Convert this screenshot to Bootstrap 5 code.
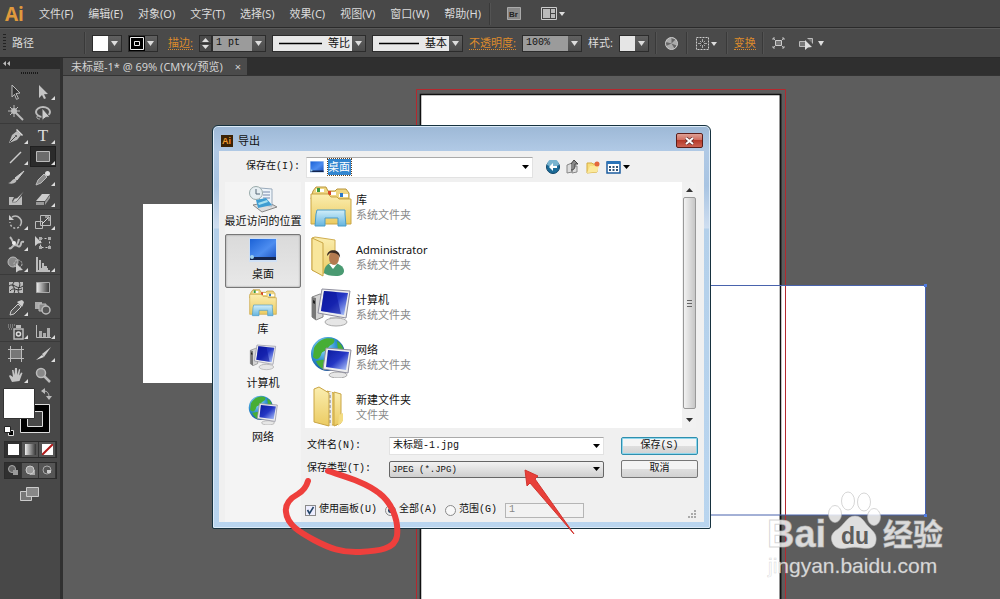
<!DOCTYPE html>
<html lang="zh-CN">
<head>
<meta charset="utf-8">
<meta name="viewport" content="width=device-width, initial-scale=1">
<title>未标题-1* @ 69% (CMYK/预览)</title>
<link href="https://cdn.jsdelivr.net/npm/bootstrap@5.3.0/dist/css/bootstrap.min.css" rel="stylesheet">
<style>
:root{--ui:"Noto Sans","Noto Sans CJK SC",sans-serif;--mono:"Liberation Mono","Noto Sans CJK SC",monospace}
body{font-family:var(--ui);font-size:11px;line-height:16px;background:#5d5d5d;color:#ddd;min-height:100vh}
button,input,select{font:inherit;color:inherit;border:0;padding:0;border-radius:0;background:none;min-width:0}
select{appearance:none}
svg{display:block;flex:none}
.menubar{height:28px;background:#484848;border-bottom:1px solid #2b2b2b}
.menubar .entries{gap:15px;padding-left:17px}
.menubar a{color:#dcdcdc}
.brand{font:bold 19px/26px "Liberation Sans Narrow","Open Sans",sans-serif;color:#e09a3c;width:17px;margin-left:5px;display:flex}
.vsep{width:2px;height:22px;background:#393939;border-right:1px solid #535353}
.controls{height:30px;background:#4a4a4a;border-top:1px solid #595959;border-bottom:1px solid #2b2b2b;gap:6px}
.lead-cell{width:78px;gap:6px;padding-left:3px}
.glyph-btn{padding:0 2px}
.grip{width:3px;height:18px;background:repeating-linear-gradient(#222 0 1px,#4a4a4a 1px 3px)}
.hot{color:#dd8a2c;border-bottom:1px dotted #dd8a2c;line-height:13px}
.boxed{height:17px;border:1px solid #2c2c2c}
.drop{background:url("data:image/svg+xml,%3Csvg xmlns='http://www.w3.org/2000/svg' width='7' height='5'%3E%3Cpath d='M0 0h7L3.5 5z' fill='%23ddd'/%3E%3C/svg%3E") right 3px center no-repeat,linear-gradient(#606060,#4c4c4c) right/13px 100% no-repeat,var(--face,#e8e8e8);padding-right:13px}
.swatch{width:30px;--face:#fff}
.swatch.pale{--face:#e5e5e5}
.numfield{--face:#9b9b9b;font-family:var(--mono);font-size:10px;color:#111;width:60px}
.numfield.short{width:54px}
.numfield input{width:100%;padding-left:3px}
.linefield{color:#111;gap:6px;padding-left:6px}
.linefield select{width:24px}
.toolbox{width:63px;background:#484848;border-right:3px solid #303030}
.toolhead{height:11px;background:#2d2d2d;padding:3px}
.toolgrip{width:17px;height:2px;margin:3px 0 7px 21px;background:repeating-linear-gradient(90deg,#181818 0 1px,#484848 1px 2px)}
.toolset{display:grid;grid-template-columns:26px 26px;padding-left:3px;gap:0 1px}
.toolset+.toolset{border-top:1px solid #3a3a3a;padding-top:1px}
.toolset button{height:21px;display:flex;align-items:center;justify-content:center;position:relative}
.toolset .more::after{content:"";position:absolute;right:1px;bottom:2px;border:2px solid;border-color:transparent #ddd #ddd transparent}
.toolset .active{background:#2b2b2b;box-shadow:inset 0 0 0 1px #202020}
.toolset .type-t{font:17px/20px "Liberation Serif",serif}
.modes{margin-left:4px;width:53px;height:17px;border:1px solid #2b2b2b;background:#555}
.modes button{flex:1;display:flex;align-items:center;justify-content:center;border-right:1px solid #333}
.modes .on{background:#303030}
.tabstrip{height:17px;background:#2f2f2f}
.doctab{background:#4b4b4b;gap:12px;padding:0 6px 0 8px;color:#d2d2d2;line-height:17px}
.canvas{background:#5d5d5d;border-top:1px solid #333}
.boards{position:absolute;inset:0;width:100%;height:100%}
.dialog{position:absolute;left:149px;top:49px;width:499px;border:1px solid #17323f;border-radius:6px 6px 2px 2px;padding:0 6px 6px;background:linear-gradient(#9db8d6 0,#b0c9e5 24px,#a8c4e2 60px,#cfdef0 102px,#b4d0ea 103px,#b9d5ef 100%);box-shadow:inset 0 0 0 1px #dcebf8;color:#111}
.titlebar{height:25px;gap:5px;padding:4px 1px 0 2px}
.close-x{width:27px;height:15px;border:1px solid #5c1e1a;border-radius:2px;background:linear-gradient(#dfa095 0,#cf6a5c 48%,#b63a2a 50%,#cc6252);display:flex;align-items:center;justify-content:center}
.pane{background:#f0f0f0}
.sun{font-family:var(--mono);font-size:10px}
.lookrow{height:31px;padding:1px 0 0 6px}
.lookrow label{width:81px;padding-left:21px}
.field-w{background:#fff;border:1px solid #e2e2e2;border-top-color:#aaa}
.lookbox{width:227px;height:21px;padding:0 3px;gap:4px}
.picked{width:23px;height:16px;background:#3286d0;color:#fff;outline:1px dotted #642}
.iconrow{gap:6px;padding-left:13px}
.places{width:76px;margin:0 4px 0 6px;background:#f4f4f4}
.places button{height:54px;width:100%;display:flex;flex-direction:column;align-items:center;justify-content:flex-end;gap:4px;padding-bottom:5px;white-space:nowrap}
.places button:first-child{height:52px;gap:0}
.places .current{border:1px solid #777;border-radius:2px;background:linear-gradient(#dadada,#e8e8e8);box-shadow:inset 0 0 2px #888}
.filelist{height:246px;background:#fff;overflow:hidden}
.fileitem{height:50px;gap:3px;padding-left:4px;line-height:15px}
.fileitem small{display:block;font-size:11px;color:#888}
.scroller{width:14px;background:#f1f1f1;padding:6px 0}
.thumb{flex:1;margin:5px 0 9px;width:13px;border:1px solid #999;border-radius:2px;background:linear-gradient(90deg,#f2f2f2,#c6c6c6);display:flex;align-items:center;justify-content:center}
.formgrid{display:grid;grid-template-columns:84px 215px 77px;row-gap:5px;align-items:center;padding-top:9px}
.formgrid label{padding-left:2px}
.formgrid button{margin-left:17px;width:77px;height:18px;border:1px solid #777;border-radius:2px;background:linear-gradient(#f4f4f4 48%,#dedede 52%,#d2d2d2);display:block}
.formgrid .primary{border-color:#2f8fae;box-shadow:inset 0 0 0 1px #8fd6ec}
.namebox{height:18px;padding:0 3px}
.typebox{height:17px;border:1px solid #666;border-radius:2px;padding-left:2px;font-size:9px;background:url("data:image/svg+xml,%3Csvg xmlns='http://www.w3.org/2000/svg' width='7' height='4'%3E%3Cpath d='M0 0h7L3.5 4z'/%3E%3C/svg%3E") right 3px center no-repeat,linear-gradient(#f2f2f2,#cfcfcf)}
.rangerow{padding:24px 0 4px}
.rangerow input[type=checkbox],.rangerow input[type=radio]{appearance:none;width:11px;height:11px;border:1px solid #8a8a8a;background:#f8f8f8;margin:0 3px 0 0;flex:none}
.rangerow input[type=radio]{border-radius:50%}
.rangerow input[type=radio]:checked{background:radial-gradient(#246 0 2px,#eee 3px)}
.rangerow input[type=checkbox]:checked{background:#eef url("data:image/svg+xml,%3Csvg xmlns='http://www.w3.org/2000/svg' width='9' height='9'%3E%3Cpath d='M1.500 4l2 3.500L7.500 1' fill='none' stroke='%23246' stroke-width='1.600'/%3E%3C/svg%3E")}
.rangerow .pagebox{width:79px;height:15px;border:1px solid #b5b5b5;color:#888;padding-left:3px;background:#f2f2f2}
</style>
</head>
<body class="d-flex flex-column overflow-hidden">
<svg width="0" height="0" class="position-absolute">
<defs>
<linearGradient id="scr" x1="0" y1="0" x2="1" y2="1"><stop offset="0" stop-color="#0a1a9c"/><stop offset=".5" stop-color="#2436c4"/><stop offset="1" stop-color="#b9d0ff"/></linearGradient>
<linearGradient id="desk" x1="0" y1="0" x2="1" y2="1"><stop offset="0" stop-color="#1b62d6"/><stop offset=".55" stop-color="#4d8df0"/><stop offset="1" stop-color="#1a50c0"/></linearGradient>
<linearGradient id="fold" x1="0" y1="0" x2="0" y2="1"><stop offset="0" stop-color="#fbeeb0"/><stop offset="1" stop-color="#ebcb62"/></linearGradient>
<linearGradient id="glass" x1="0" y1="0" x2="0" y2="1"><stop offset="0" stop-color="#d2effa"/><stop offset="1" stop-color="#64b4de"/></linearGradient>
<radialGradient id="globe" cx=".35" cy=".3" r=".8"><stop offset="0" stop-color="#9fe3ff"/><stop offset=".5" stop-color="#2d8fd0"/><stop offset="1" stop-color="#0e3f8c"/></radialGradient>
<linearGradient id="gr"><stop offset="0" stop-color="#eee"/><stop offset="1" stop-color="#333"/></linearGradient>
<symbol id="i-lib" viewBox="0 0 42 42"><path d="M3 5l3-4h10l2 4h7l2-2h9l3 4v6H1z" fill="#eed682" stroke="#b9953a"/><path d="M6 3h8v3H6zM18 6h8v3h-8zM29 8h9v3h-9z" fill="#fff"/><path d="M7 2h3v4H7z" fill="#3b9a3b"/><path d="M18 5h3v4h-3z" fill="#d9482b"/><path d="M30 7h3v4h-3z" fill="#2d78c8"/><path d="M1 8h17l3 3h6l2 2h12v25H1z" fill="url(#fold)" stroke="#c9a545"/><path d="M7 24h28v4l1 12h-8v-8H15v8H5l1-12z" fill="url(#glass)" stroke="#4a9cc8"/></symbol>
<symbol id="i-user" viewBox="0 0 42 42"><path d="M2 2l3-1 20 3v29l-14 5-9-4z" fill="url(#fold)" stroke="#d0ae50"/><path d="M2 2l11 5v33L2 34z" fill="#f8e69c" stroke="#c9a545"/><path d="M14 37c0-7 4-10 9-10s11 3 11 8c0 3-3 5-8 5-6 0-10-1-12-3z" fill="#4a9a72"/><path d="M19 28l4 5 4-5z" fill="#fff"/><ellipse cx="24" cy="22" rx="5" ry="7" fill="#b47a50"/><path d="M17 20c0-8 14-8 13 2-1-4-6-6-10-5z" fill="#3a2a22"/></symbol>
<symbol id="i-pc" viewBox="0 0 42 42"><path d="M2 11l8-3 3 1v22l-7 3-4-3z" fill="#d4d4d4" stroke="#888"/><path d="M2 11l4 1v22l-4-3z" fill="#777"/><path d="M3 14l2 1v3l-2-1z" fill="#222"/><path d="M20 31h10l2 5H18z" fill="#ccc"/><ellipse cx="26" cy="36" rx="11" ry="4" fill="#e6e6e6" stroke="#aaa"/><path d="M12 3l28 2-4 27L8 27z" fill="#eee" stroke="#8d8d9d"/><path d="M14 5l24 2-4 22-23-4z" fill="url(#scr)"/><path d="M14 5l12 1 5 22-20-3z" fill="#0b16a0" opacity=".6"/></symbol>
<symbol id="i-net" viewBox="0 0 42 42"><circle cx="18" cy="18" r="17" fill="url(#globe)"/><path d="M4 12C9 2 18 1 24 3c2 5-4 5-6 9s-6 2-7 7c-2 5-5 5-8 2zM11 24c5-1 9 3 8 7l-5 3c-5-3-7-6-8-9zM27 5c5 3 7 8 7 12l-6-2z" fill="#47ae35"/><path d="M24 36h8l2 4H22z" fill="#ccc"/><ellipse cx="28" cy="39" rx="9" ry="3" fill="#e6e6e6" stroke="#aaa"/><path d="M16 12l25 2-3 23-25-4z" fill="#eee" stroke="#8d8d9d"/><path d="M18 14l21 2-3 18-20-3z" fill="url(#scr)"/></symbol>
<symbol id="i-dir" viewBox="0 0 42 42"><path d="M17 5l10 3v31H17z" fill="#e6c868" stroke="#c9a545"/><path d="M17 6h5v34h-5z" fill="#eee"/><path d="M20 9v30" stroke="#777" stroke-dasharray="3 2"/><path d="M24 6l7 2v29l-7 3z" fill="url(#fold)" stroke="#c9a545"/><path d="M4 3l5-2 10 6v33L4 36z" fill="url(#fold)" stroke="#c9a545"/><path d="M29 29l4-2v8l-5 5z" fill="#f3dc83"/></symbol>
<symbol id="i-desk" viewBox="0 0 28 24"><path d="M0 0h28v24H0z" fill="#cfe0f5"/><path d="M1 1h26v21H1z" fill="url(#desk)"/><path d="M1 19h26v3H1z" fill="#15264f"/><circle cx="3" cy="19" r="2" fill="#9cd0f0"/></symbol>
<symbol id="i-recent" viewBox="0 0 28 28"><path d="M4 20l15-3 9 5-15 5z" fill="#ddd" stroke="#888"/><path d="M11 3l12 1v17l-13-1z" fill="#eef4fa" stroke="#9ab"/><path d="M14 7h7M14 10h7M14 13h7" stroke="#78a"/><circle cx="7" cy="8" r="6.500" fill="#e6eef2" stroke="#9aa"/><path d="M7 4v5h4" fill="none" stroke="#567"/><path d="M7 15l10-2 6 7-14 3z" fill="#3f9dd2"/><path d="M9 18l9-3 1 2-9 3z" fill="#a6e0f0"/></symbol>
<symbol id="t-sel" viewBox="0 0 18 18"><path d="M5 2l8 8-4 .5 2.500 5-2 .8-2-5L5 14z" fill="#333" stroke="#bbb"/></symbol>
<symbol id="t-dir" viewBox="0 0 18 18"><path d="M5 2l9 9-4 .3 2 4-2 .8-2-4L5 15z" fill="#c4c4c4"/></symbol>
<symbol id="t-wand" viewBox="0 0 18 18"><path d="M8 8l8 8" stroke="#bbb" stroke-width="2"/><circle cx="7" cy="7" r="3" fill="#bbb"/><path d="M7 1v12M1 7h12M3 3l8 8M11 3l-8 8" stroke="#bbb"/></symbol>
<symbol id="t-lasso" viewBox="0 0 18 18"><ellipse cx="9" cy="8" rx="7" ry="5" fill="none" stroke="#bbb" stroke-width="2"/><path d="M4 11c-3 4 1 4 2 4" fill="none" stroke="#bbb"/><path d="M8 4l8 9-4 .4-4 3z" fill="#ccc" stroke="#484848"/></symbol>
<symbol id="t-pen" viewBox="0 0 18 18"><path d="M2 16L5 8l5-4 4 4-4 5z" fill="#bbb"/><path d="M10 2l6 6-1 1-6-6z" fill="#ddd"/><path d="M3 15l5-5" stroke="#444"/><circle cx="9" cy="9" r="1" fill="#444"/></symbol>
<symbol id="t-line" viewBox="0 0 18 18"><path d="M3 15L14 4" stroke="#ccc" stroke-width="1.500"/></symbol>
<symbol id="t-rect" viewBox="0 0 18 18"><path d="M2.500 3.500h13v10h-13z" fill="#6c6c6c" stroke="#bbb"/></symbol>
<symbol id="t-brush" viewBox="0 0 18 18"><path d="M17 2l-7 9-2-2z" fill="#ccc" stroke="#ccc"/><path d="M9 10c2 3-3 6-8 4 4 0 4-5 8-4z" fill="#bbb"/></symbol>
<symbol id="t-pencil" viewBox="0 0 18 18"><path d="M2 16l2-5 6-6 3 3-6 6z" fill="#8c8c8c" stroke="#bbb"/><circle cx="13.500" cy="4.500" r="2.500" fill="#ddd"/></symbol>
<symbol id="t-blob" viewBox="0 0 18 18"><path d="M2 7h5l-2 4 4 1 6-6v9H2z" fill="#bbb"/><path d="M17 1l-6 9c-2 3-4 2-6 2 2-1 1-4 5-4z" fill="#ccc" stroke="#444" stroke-width=".5"/></symbol>
<symbol id="t-erase" viewBox="0 0 18 18"><path d="M2 11l6-7h8l-5 7z" fill="#ccc"/><path d="M2 12h8v3H2zM11 12l5-7v3l-5 7z" fill="#999"/></symbol>
<symbol id="t-rot" viewBox="0 0 18 18"><path d="M5 4c6-3 12 3 8 9" fill="none" stroke="#bbb" stroke-width="1.500"/><path d="M12 14c-4 3-9 0-9-5" fill="none" stroke="#bbb" stroke-width="1.500" stroke-dasharray="2 2"/><path d="M2 2v5h5z" fill="#ccc"/></symbol>
<symbol id="t-scale" viewBox="0 0 18 18"><path d="M6.500 2.500h10v10h-10zM1.500 8.500h7v7h-7z" fill="none" stroke="#bbb"/><path d="M8 11l6-6M11 4h4v4" stroke="#ddd" fill="none"/></symbol>
<symbol id="t-warp" viewBox="0 0 18 18"><path d="M2 14c3 2 3-3 6-3s3 3 5 1 0-5 4-4M3 3c3 3 3 7 5 8s3-2 4-6" fill="none" stroke="#bbb" stroke-width="2"/><circle cx="7" cy="9" r="2" fill="#eee"/></symbol>
<symbol id="t-free" viewBox="0 0 18 18"><path d="M6.500 4.500h9v9h-9z" fill="none" stroke="#ccc" stroke-dasharray="2 2"/><path d="M5 3h3v3H5zM14 3h3v3h-3zM14 12h3v3h-3zM5 12h3v3H5z" fill="#aaa"/><path d="M1 2l7 7-4 .4L1 12z" fill="#ccc"/></symbol>
<symbol id="t-shape" viewBox="0 0 18 18"><circle cx="6" cy="7" r="5" fill="#888" stroke="#bbb"/><circle cx="11" cy="9" r="4" fill="none" stroke="#bbb" stroke-dasharray="2 1"/><path d="M9 8l7 7-4 .4-3 2z" fill="#ccc"/></symbol>
<symbol id="t-persp" viewBox="0 0 18 18"><path d="M3 2v14h13M6 5v9h8M9 8v4h4" stroke="#bbb" stroke-width="2" fill="none"/></symbol>
<symbol id="t-mesh" viewBox="0 0 18 18"><path d="M2 4h14v11H2z" fill="#bbb"/><path d="M2 8c5-4 8 5 14 0M3 13c4-5 7 1 12-2M7 4c-4 5 3 5 0 11M12 4c3 4-3 7 0 11" fill="none" stroke="#333"/></symbol>
<symbol id="t-grad" viewBox="0 0 18 18"><path d="M2.500 4.500h13v10h-13z" fill="url(#gr)" stroke="#aaa"/></symbol>
<symbol id="t-eye" viewBox="0 0 18 18"><path d="M3 16l1-4 7-7 3 3-7 7z" fill="#555" stroke="#ccc"/><path d="M10 3l5 5 1-2 1-3-2-2-3 1z" fill="#ccc"/></symbol>
<symbol id="t-blend" viewBox="0 0 18 18"><path d="M1 3h7v7H1z" fill="#aaa"/><path d="M5 5h7v7H5z" fill="#888" stroke="#bbb"/><circle cx="12" cy="11" r="4" fill="#555" stroke="#bbb" stroke-width="1.500"/></symbol>
<symbol id="t-spray" viewBox="0 0 18 18"><path d="M7 7h9v10H7z" fill="none" stroke="#bbb" stroke-width="1.500"/><path d="M9 3h5v3H9z" fill="#bbb"/><circle cx="11.500" cy="12" r="2" fill="none" stroke="#ddd" stroke-width="1.500"/><path d="M1 3h7M1 5h5M2 7h4" stroke="#aaa" stroke-dasharray="1 1"/></symbol>
<symbol id="t-graph" viewBox="0 0 18 18"><path d="M2.500 3v12.500H17" stroke="#bbb" fill="none"/><path d="M5 9h3v6H5zM9 11h3v4H9zM13 6h3v9h-3z" fill="#aaa"/></symbol>
<symbol id="t-board" viewBox="0 0 18 18"><path d="M4 4h10v9H4z" fill="#777"/><path d="M1 4.500h16M1 13.500h16M3.500 1v16M14.500 1v16" stroke="#bbb"/></symbol>
<symbol id="t-slice" viewBox="0 0 18 18"><path d="M17 2l-7 10-2-3z" fill="#ccc"/><path d="M2 15l6-5 2 2z" fill="#ddd"/></symbol>
<symbol id="t-hand" viewBox="0 0 18 18"><path d="M5 16L2 10l1-1 3 2-1-7h1.500l1 5 .5-7H10l.3 7 1.700-6 1.200.4-1 6 2-3 1.300.6-3 8z" fill="#c4c4c4"/></symbol>
<symbol id="t-zoom" viewBox="0 0 18 18"><circle cx="7" cy="7" r="4.500" fill="#888" stroke="#bbb" stroke-width="1.500"/><path d="M10 10l6 6" stroke="#bbb" stroke-width="2.500"/></symbol>
</defs>
</svg>

<nav class="menubar d-flex align-items-center" aria-label="主菜单">
  <span class="brand">Ai</span>
  <div class="entries d-flex">
    <a class="text-decoration-none" href="#">文件(F)</a><a class="text-decoration-none" href="#">编辑(E)</a><a class="text-decoration-none" href="#">对象(O)</a><a class="text-decoration-none" href="#">文字(T)</a><a class="text-decoration-none" href="#">选择(S)</a><a class="text-decoration-none" href="#">效果(C)</a><a class="text-decoration-none" href="#">视图(V)</a><a class="text-decoration-none" href="#">窗口(W)</a><a class="text-decoration-none" href="#">帮助(H)</a>
  </div>
  <span class="vsep me-3 ms-2"></span>
  <button aria-label="Bridge"><svg width="14" height="13"><path d="M.5.5h13v12H.5z" fill="#888" stroke="#aaa"/><text x="2" y="10" font-size="8" font-weight="bold" fill="#222" font-family="Liberation Sans">Br</text></svg></button>
  <button class="ms-3 ps-1" aria-label="排列文档"><svg width="25" height="13"><path d="M.5.5h15v12H.5z" fill="#444" stroke="#ccc"/><path d="M2 2h7v9H2zM10 2h4v4h-4zM10 7h4v4h-4z" fill="#bbb"/><path d="M18 5h6l-3 4z" fill="#ddd"/></svg></button>
</nav>

<div class="controls d-flex align-items-center">
  <div class="lead-cell d-flex align-items-center"><span class="grip"></span>路径</div>
  <span class="vsep"></span>
  <button class="boxed drop swatch" aria-label="填色"></button>
  <button class="boxed drop swatch me-1" aria-label="描边颜色"><svg width="16" height="15"><path d="M0 0h16v15H0z"/><path d="M1.500 1.500h13v12h-13zM5.500 5.500h5v4h-5z" fill="none" stroke="#eee"/></svg></button>
  <a class="hot text-decoration-none" href="#">描边:</a>
  <div class="d-flex">
    <button class="boxed" aria-label="增减"><svg width="11" height="15"><path d="M2 6l3.500-4L9 6zM2 9l3.500 4L9 9z" fill="#ddd"/><path d="M0 7.500h11" stroke="#333"/></svg></button>
    <div class="boxed drop numfield short d-flex"><input value="1 pt" aria-label="描边粗细"></div>
  </div>
  <div class="boxed drop linefield d-flex align-items-center"><svg width="43" height="3"><path d="M0 1.500h43" stroke="#000" stroke-width="1.500"/></svg><select aria-label="宽度配置"><option>等比</option></select></div>
  <div class="boxed drop linefield d-flex align-items-center"><svg width="40" height="3"><path d="M0 1.500h40" stroke="#000" stroke-width="1.500"/></svg><select aria-label="画笔"><option>基本</option></select></div>
  <a class="hot text-decoration-none" href="#">不透明度:</a>
  <div class="boxed drop numfield d-flex"><input value="100%" aria-label="不透明度"></div>
  <span>样式:</span>
  <button class="boxed drop swatch pale" aria-label="样式"></button>
  <span class="vsep"></span>
  <button class="glyph-btn" aria-label="重新着色"><svg width="13" height="13"><circle cx="6.500" cy="6.500" r="6" fill="#aaa"/><path d="M6.500 6.500V1l4 1.500zM6.500 6.500l5 2-2 3zM6.500 6.500L1 9V5z" fill="#666"/><circle cx="6.500" cy="6.500" r="6" fill="none" stroke="#ccc"/></svg></button>
  <span class="vsep"></span>
  <button class="glyph-btn" aria-label="对齐"><svg width="22" height="13"><path d="M.5.5h12v12H.5z" fill="none" stroke="#ccc" stroke-dasharray="2 1"/><path d="M6.500 2v9M2 6.500h9M4 4l5 5M9 4L4 9" stroke="#aaa"/><circle cx="6.500" cy="6.500" r="1.500" fill="#333"/><path d="M15 5h6l-3 4z" fill="#ddd"/></svg></button>
  <span class="vsep"></span>
  <a class="hot text-decoration-none" href="#">变换</a>
  <span class="vsep"></span>
  <button class="glyph-btn" aria-label="隔离"><svg width="13" height="12"><path d="M3.500 3.500h6v5h-6z" fill="#777" stroke="#ccc"/><path d="M1 3V1h2M10 1h2v2M12 9v2h-2M3 11H1V9M1 1l2 2M12 1l-2 2M1 11l2-2M12 11l-2-2" fill="none" stroke="#bbb"/></svg></button>
  <button class="glyph-btn ms-1" aria-label="选择类似对象"><svg width="25" height="13"><path d="M.5 4.500h6v5h-6zM8.500 1.500h5v5" fill="#777" stroke="#bbb"/><path d="M6 3l7 7-4 .4L6 13z" fill="#ddd"/><path d="M19 4h6l-3 5z" fill="#ddd"/></svg></button>
</div>

<div class="d-flex flex-grow-1">
  <aside class="toolbox flex-shrink-0" aria-label="工具">
    <div class="toolhead"><svg width="8" height="5"><path d="M3 0v5L0 2.500zM7 0v5L4 2.500z" fill="#bbb"/></svg></div>
    <div class="toolgrip"></div>
    <div class="toolset">
      <button aria-label="选择"><svg width="18" height="18"><use href="#t-sel"/></svg></button><button class="more" aria-label="直接选择"><svg width="18" height="18"><use href="#t-dir"/></svg></button>
      <button aria-label="魔棒"><svg width="18" height="18"><use href="#t-wand"/></svg></button><button aria-label="套索"><svg width="18" height="18"><use href="#t-lasso"/></svg></button>
    </div>
    <div class="toolset">
      <button class="more" aria-label="钢笔"><svg width="18" height="18"><use href="#t-pen"/></svg></button><button class="more type-t" aria-label="文字">T</button>
      <button class="more" aria-label="直线段"><svg width="18" height="18"><use href="#t-line"/></svg></button><button class="more active" aria-label="矩形"><svg width="18" height="18"><use href="#t-rect"/></svg></button>
      <button aria-label="画笔"><svg width="18" height="18"><use href="#t-brush"/></svg></button><button class="more" aria-label="铅笔"><svg width="18" height="18"><use href="#t-pencil"/></svg></button>
      <button aria-label="斑点画笔"><svg width="18" height="18"><use href="#t-blob"/></svg></button><button class="more" aria-label="橡皮擦"><svg width="18" height="18"><use href="#t-erase"/></svg></button>
    </div>
    <div class="toolset">
      <button class="more" aria-label="旋转"><svg width="18" height="18"><use href="#t-rot"/></svg></button><button class="more" aria-label="比例缩放"><svg width="18" height="18"><use href="#t-scale"/></svg></button>
      <button class="more" aria-label="宽度"><svg width="18" height="18"><use href="#t-warp"/></svg></button><button aria-label="自由变换"><svg width="18" height="18"><use href="#t-free"/></svg></button>
      <button class="more" aria-label="形状生成器"><svg width="18" height="18"><use href="#t-shape"/></svg></button><button class="more" aria-label="透视网格"><svg width="18" height="18"><use href="#t-persp"/></svg></button>
    </div>
    <div class="toolset">
      <button aria-label="网格"><svg width="18" height="18"><use href="#t-mesh"/></svg></button><button aria-label="渐变"><svg width="18" height="18"><use href="#t-grad"/></svg></button>
      <button class="more" aria-label="吸管"><svg width="18" height="18"><use href="#t-eye"/></svg></button><button aria-label="混合"><svg width="18" height="18"><use href="#t-blend"/></svg></button>
    </div>
    <div class="toolset">
      <button class="more" aria-label="符号喷枪"><svg width="18" height="18"><use href="#t-spray"/></svg></button><button class="more" aria-label="柱形图"><svg width="18" height="18"><use href="#t-graph"/></svg></button>
    </div>
    <div class="toolset">
      <button aria-label="画板"><svg width="18" height="18"><use href="#t-board"/></svg></button><button class="more" aria-label="切片"><svg width="18" height="18"><use href="#t-slice"/></svg></button>
      <button class="more" aria-label="抓手"><svg width="18" height="18"><use href="#t-hand"/></svg></button><button aria-label="缩放"><svg width="18" height="18"><use href="#t-zoom"/></svg></button>
    </div>
    <svg width="58" height="56"><path d="M20.500 19.500h29v28h-29z" fill="#000" stroke="#ddd"/><path d="M27.500 26.500h15v15h-15z" fill="#484848" stroke="#ddd"/><path d="M3.500 3.500h31v30h-31z" fill="#fff" stroke="#333"/><path d="M44 6c3 0 5 2 5 6" stroke="#bbb" fill="none"/><path d="M41 6l4-3v6zM46 11h6l-3 4z" fill="#bbb"/><path d="M8.500 45.500h5v5h-5z" fill="#000" stroke="#ddd"/><path d="M4.500 41.500h6v6h-6z" fill="#fff" stroke="#222"/></svg>
    <div class="modes d-flex"><button class="on" aria-label="颜色"><svg width="11" height="11"><path d="M0 0h11v11H0z" fill="#fff"/></svg></button><button aria-label="渐变填充"><svg width="11" height="11"><path d="M0 0h11v11H0z" fill="url(#gr)"/></svg></button><button aria-label="无"><svg width="11" height="11"><path d="M0 0h11v11H0z" fill="#fff"/><path d="M0 11L11 0" stroke="#b01c1c" stroke-width="2"/></svg></button></div>
    <div class="modes d-flex mt-1"><button class="on" aria-label="正常绘图"><svg width="11" height="11"><circle cx="4" cy="4" r="3.500" fill="#666" stroke="#aaa"/><path d="M5 5h5v5H5z" fill="#999"/></svg></button><button aria-label="背面绘图"><svg width="11" height="11"><path d="M5 5h5v5H5z" fill="#aaa"/><circle cx="5" cy="5" r="4" fill="#999" stroke="#ccc"/></svg></button><button aria-label="内部绘图"><svg width="11" height="11"><circle cx="5" cy="5" r="4" fill="#555" stroke="#aaa"/><path d="M5 5h4v3H5z" fill="#ccc"/></svg></button></div>
    <button class="d-block ms-3 mt-2 ps-1" aria-label="更改屏幕模式"><svg width="20" height="15"><path d="M.5 4.500h11v9H.5z" fill="#777" stroke="#ccc"/><path d="M6.500.500h12v9h-12z" fill="#888" stroke="#ccc"/></svg></button>
  </aside>

  <main class="d-flex flex-column flex-grow-1">
    <div class="tabstrip d-flex"><div class="doctab d-flex"><span>未标题-1* @ 69% (CMYK/预览)</span><button aria-label="关闭文档">×</button></div></div>
    <div class="canvas position-relative flex-grow-1 overflow-hidden">
      <svg class="boards" aria-hidden="true"><g transform="translate(-63 -76)">
        <path d="M143 204h180v179H143z" fill="#fff"/>
        <path d="M420.500 94.500h360v560h-360z" fill="#fff" stroke="#111" stroke-width="1.500"/>
        <path d="M500 286h425v229H500z" fill="#fff"/>
        <path d="M780.500 94v560" stroke="#111" stroke-width="1.500"/>
        <path d="M416.500 654V89.500h369V654" fill="none" stroke="#b4282e"/>
        <path d="M500 285.500h425.500v229.500H500" fill="none" stroke="#4963ad"/>
        <path d="M924 284h3v3h-3zM924 514h3v3h-3z" fill="#4f7be0"/>
      </g></svg>

      <section class="dialog" role="dialog" aria-label="导出">
        <div class="titlebar d-flex align-items-center">
          <svg width="12" height="12"><path d="M0 0h12v12H0z" fill="#3a2205"/><text x="1" y="9" font-size="9" font-weight="bold" fill="#f09a30" font-family="Liberation Sans">Ai</text></svg>
          <span class="me-auto">导出</span>
          <button class="close-x" aria-label="关闭"><svg width="9" height="8"><path d="M1 1l7 6M8 1L1 7" stroke="#633" stroke-width="3.500"/><path d="M1 1l7 6M8 1L1 7" stroke="#fff" stroke-width="2"/></svg></button>
        </div>
        <div class="pane">
          <div class="lookrow d-flex align-items-center">
            <label for="look" class="sun">保存在(I):</label>
            <div class="field-w lookbox d-flex align-items-center">
              <svg width="14" height="12"><use href="#i-desk"/></svg>
              <select id="look" class="picked"><option>桌面</option></select>
              <svg class="ms-auto" width="7" height="4"><path d="M0 0h7L3.500 4z"/></svg>
            </div>
            <div class="iconrow d-flex align-items-center">
              <button aria-label="后退"><svg width="14" height="14"><circle cx="7" cy="7" r="6.500" fill="#1c6c98" stroke="#0e4468"/><path d="M1 5a6 6 0 0112 0c-4 2-8 2-12 0" fill="#79b4d0"/><path d="M7 3L3 7l4 4V8h4V6H7z" fill="#fff"/></svg></button>
              <button aria-label="向上"><svg width="14" height="14"><path d="M1 5l5-2v9l-5 1zM6 6h5v6l-5 1z" fill="#ddd" stroke="#888"/><path d="M5 10c4 0 4-3 4-6h3L8 0 5 4" fill="#888" stroke="#444"/></svg></button>
              <button aria-label="新建文件夹"><svg width="14" height="14"><path d="M1 3h5l1 1h4v8l-10 1z" fill="#f7dd7c" stroke="#d5ac40"/><path d="M1 13l3-7h9l-2 6z" fill="#fbe99c"/><circle cx="11" cy="4" r="2.500" fill="#e4673c"/></svg></button>
              <button aria-label="视图"><svg width="24" height="13"><path d="M1 1h13v11H1z" fill="#fff" stroke="#1d5c9e" stroke-width="1.500"/><path d="M1 0h13v3H1z" fill="#2b74b8"/><path d="M3 6h2M6.500 6h2M10 6h2M3 9h2M6.500 9h2M10 9h2" stroke="#357" stroke-width="2"/><path d="M17 4h7l-3.500 4z"/></svg></button>
            </div>
          </div>
          <div class="d-flex">
            <div class="places flex-shrink-0">
              <button><svg width="28" height="28"><use href="#i-recent"/></svg>最近访问的位置</button>
              <button class="current"><svg width="28" height="24"><use href="#i-desk"/></svg>桌面</button>
              <button><svg width="30" height="28"><use href="#i-lib"/></svg>库</button>
              <button><svg width="28" height="28"><use href="#i-pc"/></svg>计算机</button>
              <button><svg width="30" height="30"><use href="#i-net"/></svg>网络</button>
            </div>
            <div class="flex-grow-1 pe-2">
              <div class="filelist d-flex">
                <div class="flex-grow-1">
                  <div class="fileitem d-flex align-items-center"><svg width="44" height="42"><use href="#i-lib"/></svg><div>库<small>系统文件夹</small></div></div>
                  <div class="fileitem d-flex align-items-center"><svg width="44" height="42"><use href="#i-user"/></svg><div>Administrator<small>系统文件夹</small></div></div>
                  <div class="fileitem d-flex align-items-center"><svg width="44" height="42"><use href="#i-pc"/></svg><div>计算机<small>系统文件夹</small></div></div>
                  <div class="fileitem d-flex align-items-center"><svg width="44" height="42"><use href="#i-net"/></svg><div>网络<small>系统文件夹</small></div></div>
                  <div class="fileitem d-flex align-items-center"><svg width="44" height="42"><use href="#i-dir"/></svg><div>新建文件夹<small>文件夹</small></div></div>
                </div>
                <div class="scroller d-flex flex-column align-items-center"><svg width="7" height="4"><path d="M0 4h7L3.500 0z" fill="#333"/></svg><div class="thumb"><svg width="5" height="7"><path d="M0 .5h5M0 3.500h5M0 6.500h5" stroke="#666"/></svg></div><svg width="7" height="4"><path d="M0 0h7L3.500 4z" fill="#333"/></svg></div>
              </div>
              <div class="formgrid sun">
                <label for="fname">文件名(N):</label>
                <div class="field-w namebox d-flex align-items-center"><input id="fname" class="flex-grow-1" value="未标题-1.jpg"><svg width="7" height="4"><path d="M0 0h7L3.500 4z"/></svg></div>
                <button class="primary">保存(S)</button>
                <label for="ftype">保存类型(T):</label>
                <select id="ftype" class="typebox"><option>JPEG (*.JPG)</option></select>
                <button>取消</button>
              </div>
              <div class="rangerow sun d-flex align-items-center">
                <input type="checkbox" id="useab" checked><label for="useab">使用画板(U)</label>
                <input type="radio" name="rng" id="all" checked class="ms-2"><label for="all">全部(A)</label>
                <input type="radio" name="rng" id="part" class="ms-2"><label for="part">范围(G)</label>
                <input class="pagebox ms-2" value="1" disabled aria-label="画板范围">
                <svg class="ms-auto align-self-end" width="8" height="8"><path d="M6 1h2M3 4h2M6 4h2M0 7h2M3 7h2M6 7h2" stroke="#aaa" stroke-width="2"/></svg>
              </div>
            </div>
          </div>
        </div>
      </section>

      <svg class="boards pe-none" role="img" aria-label="标注与水印"><g transform="translate(-63 -76)">
        <path d="M308 481c-2 7-5 10-10 13-9 5-13 11-12 18 1 13 15 21 28 28 15 8 28 13 46 12 19-1 35-3 37-16 2-17-6-34-18-43-14-11-33-16-51-22" fill="none" stroke="#ee3f3c" stroke-width="6" stroke-linecap="round" stroke-linejoin="round"/>
        <path d="M525 470l13 6-3 3 39 55-44-51-3 3z" fill="#e8403a" stroke="#d2342f"/>
        <g fill="#fff" fill-opacity=".8" stroke="#bbb" stroke-opacity=".6" stroke-width="1">
          <text x="767" y="547" font-size="38" font-weight="700" font-family="Liberation Sans">Bai</text>
          <ellipse cx="835" cy="514" rx="6.500" ry="8.500"/><ellipse cx="848" cy="501" rx="6.500" ry="9"/><ellipse cx="864" cy="502" rx="6.500" ry="9"/><ellipse cx="874" cy="517" rx="6.500" ry="8.500"/>
          <path d="M855 516c-8 0-10 8-17 13-7 4-8 9-5 15 3 5 9 5 14 4 6-1 9-1 15 0 8 1 13 0 14-7 1-6-2-9-6-13-5-4-7-12-15-12z"/>
          <text x="883" y="545" font-size="30" font-weight="700" font-family="Noto Sans CJK SC">经验</text>
          <text x="768" y="573" font-size="21" stroke-width=".5" font-family="Liberation Sans">jingyan.baidu.com</text>
        </g>
        <text x="841" y="544" font-size="23" font-weight="700" fill="#5d5d5d" font-family="Liberation Sans">du</text>
      </g></svg>
    </div>
  </main>
</div>
<script src="https://cdn.jsdelivr.net/npm/bootstrap@5.3.0/dist/js/bootstrap.bundle.min.js"></script>
</body>
</html>
